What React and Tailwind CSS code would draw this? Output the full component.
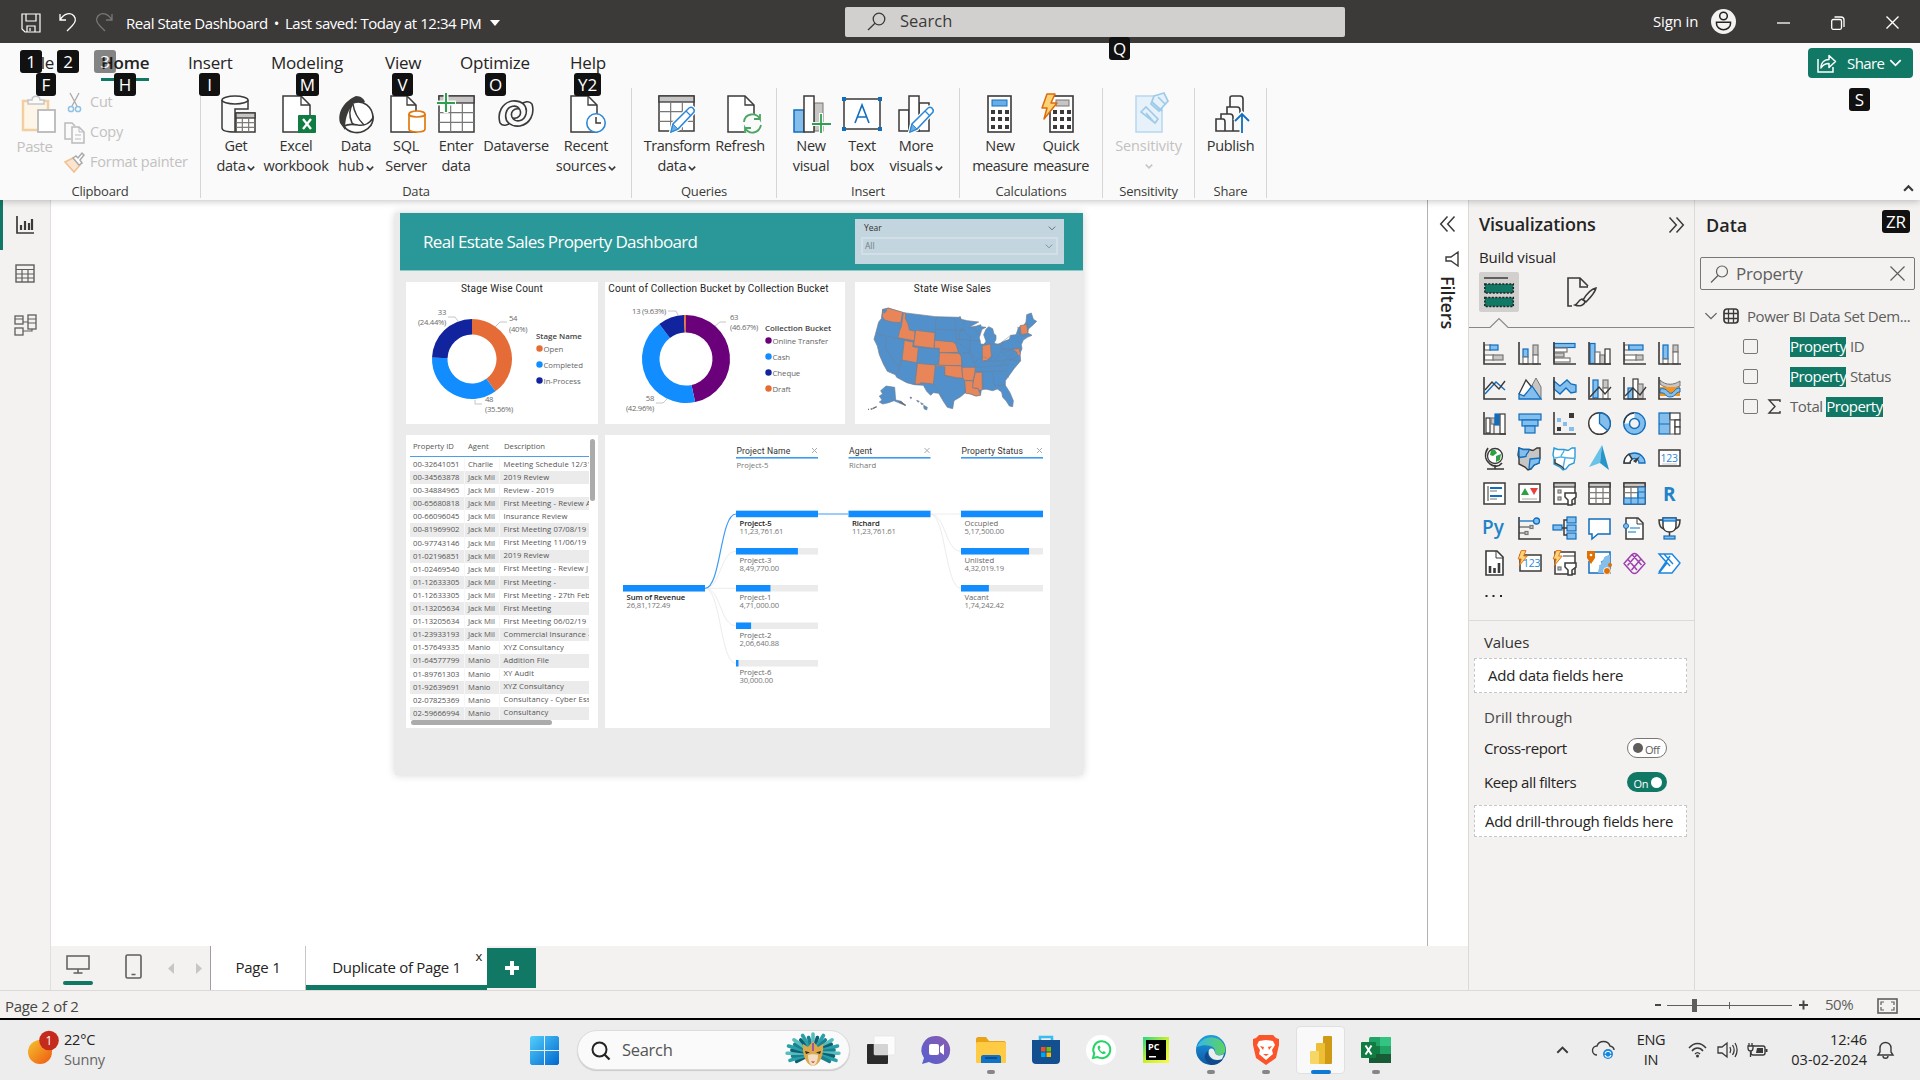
import React from "react";

const K = "#3b3a39";
const B = "#106ebe";
const L = "#83beec";
const G = "#797775";
const LG = "#c8c6c4";

function Svg({ w = 23, h, vb, className = "", children, ...rest }) {
  const hh = h ?? w;
  return (
    <svg width={w} height={hh} viewBox={vb || `0 0 ${w} ${hh}`} fill="none" className={`shrink-0 overflow-visible ${className}`} {...rest}>
      {children}
    </svg>
  );
}

function KeyTip({ children, className = "" }) {
  return (
    <span className={`absolute z-20 flex h-[23px] items-center justify-center rounded-[3px] bg-[#111] text-[17px] leading-none text-white ${className}`}>
      {children}
    </span>
  );
}

function Chevron({ className = "", w = 8, color = K, sw = 2 }) {
  return (
    <Svg w={w} h={w * 0.6} vb="0 0 10 6" className={className}>
      <path d="M1 .8 5 4.8 9 .8" stroke={color} strokeWidth={sw} />
    </Svg>
  );
}

/* ---------- Title bar ---------- */
function TitleBar() {
  return (
    <header className="relative z-20 flex h-[43px] shrink-0 items-center bg-[#3b3a39] text-white">
      <div className="flex w-[845px] items-center pl-[21px]">
        <Svg w={20} h={20} className="mt-0.5">
          <path d="M1 1h18v18H4l-3-3zM5 1v7h10V1M6 19v-6h8v6M9 15v3" stroke="#fff" strokeWidth="1.2" />
        </Svg>
        <Svg w={17} h={20} className="ml-[18px]">
          <path d="M1 2v6h6M1 8C5 1 12 0 15 4s1 7-2 10l-5 5" stroke="#fff" strokeWidth="1.3" />
        </Svg>
        <Svg w={17} h={20} className="ml-[20px]">
          <path d="M16 2v6h-6M16 8C12 1 5 0 2 4s-1 7 2 10l5 5" stroke="#797775" strokeWidth="1.3" />
        </Svg>
        <span className="ml-[13px] mt-1 whitespace-nowrap text-[15px] tracking-[-0.45px]">Real State Dashboard<span className="mx-[6px]">•</span>Last saved: Today at 12:34 PM</span>
        <Svg w={10} h={6} className="ml-[9px] mt-0.5"><path d="M0 0h10L5 6z" fill="#fff" /></Svg>
      </div>
      <div className="relative flex h-[30px] w-[500px] items-center rounded-[2px] bg-[#d2d0ce] pl-[22px] text-[#3b3a39]">
        <Svg w={19} h={19}><circle cx="12" cy="7" r="5.8" stroke={K} strokeWidth="1.3" /><path d="M8 11.2 1 18" stroke={K} strokeWidth="1.3" /></Svg>
        <span className="ml-[14px] text-[16.5px]">Search</span>
        <KeyTip className="left-[264px] top-[30px] w-[21px]">Q</KeyTip>
      </div>
      <div className="flex flex-1 items-center pl-[308px]">
        <span className="w-[58px] text-[15px] tracking-[-0.15px]">Sign in</span>
        <Svg w={25} h={25}>
          <circle cx="12.5" cy="12.5" r="12.5" fill="#f3f2f1" />
          <circle cx="12.5" cy="7" r="3.8" stroke="#222" strokeWidth="1.5" />
          <path d="M5.5 13.2h14v1.5a7 6 0 0 1-14 0z" stroke="#222" strokeWidth="1.5" />
        </Svg>
        <Svg w={13} h={2} className="ml-[41px] mt-0.5"><path d="M0 1h13" stroke="#fff" strokeWidth="1.3" /></Svg>
        <Svg w={14} h={14} className="ml-[41px] mt-0.5"><rect x=".7" y="3.5" width="9.8" height="9.8" rx="1.5" stroke="#fff" strokeWidth="1.3" /><path d="M3.5 1h6.5a3 3 0 0 1 3 3v7" stroke="#fff" strokeWidth="1.3" /></Svg>
        <Svg w={13} h={13} className="ml-[41px] mt-0.5"><path d="M.5.5l12 12M12.5.5l-12 12" stroke="#fff" strokeWidth="1.4" /></Svg>
      </div>
    </header>
  );
}

/* ---------- Ribbon ---------- */
const tabs = [
  { name: "File", w: "w-[73px]", tip: "F", tipCls: "left-[8px] w-[20px]" },
  { name: "Home", w: "w-[87px]", tip: "H", tipCls: "left-[13px] w-[22px]", active: true },
  { name: "Insert", w: "w-[83px]", tip: "I", tipCls: "left-[11px] w-[21px]" },
  { name: "Modeling", w: "w-[114px]", tip: "M", tipCls: "left-[25px] w-[23px]" },
  { name: "View", w: "w-[75px]", tip: "V", tipCls: "left-[7px] w-[21px]" },
  { name: "Optimize", w: "w-[110px]", tip: "O", tipCls: "left-[25px] w-[21px]" },
  { name: "Help", w: "w-[90px]", tip: "Y2", tipCls: "left-[4px] w-[27px]" },
];

function MenuTabs() {
  return (
    <nav className="relative flex h-10 items-center pl-[28px] text-[17px] text-[#252423]">
      {tabs.map((t) => (
        <div key={t.name} className={`relative flex h-10 items-center ${t.w}`}>
          <span className={t.active ? "font-semibold tracking-[-0.2px]" : "tracking-[-0.2px]"}>{t.name}</span>
          {t.active && <span className="absolute bottom-[2px] left-0 h-[3px] w-[48px] bg-[#117865]" />}
          <KeyTip className={`top-[30px] ${t.tipCls}`}>{t.tip}</KeyTip>
        </div>
      ))}
      <KeyTip className="left-[20px] top-[7px] w-[22px]">1</KeyTip>
      <KeyTip className="left-[57px] top-[7px] w-[22px]">2</KeyTip>
      <KeyTip className="left-[94px] top-[7px] w-[22px] opacity-50">3</KeyTip>
      <div className="relative ml-auto mr-[7px] flex h-[30px] w-[105px] items-center rounded-[4px] bg-[#117865] pl-[9px] text-white">
        <Svg w={20} h={19}>
          <path d="M1 5v13h15v-5" stroke="#fff" strokeWidth="1.5" />
          <path d="M4 14c0-6 4-8.5 8-8.5V1.500l6.500 6-6.500 6V9.500c-3 0-6 1-8 4.500z" stroke="#fff" strokeWidth="1.500" strokeLinejoin="round" />
        </Svg>
        <span className="ml-[10px] w-[38px] text-[15px] font-medium tracking-[-0.6px]">Share</span>
        <Chevron w={13} color="#fff" sw={1.3} className="ml-[4px]" />
        <KeyTip className="left-[41px] top-[40px] w-[21px]">S</KeyTip>
      </div>
    </nav>
  );
}

const Doc = ({ x = 6, w = 27 }) => (
  <>
    <path d={`M${x} 1h${w - 9}l9 9v27h-${w}z`} fill="#fff" stroke={K} strokeWidth="1.5" />
    <path d={`M${x + w - 9} 1v9h9`} stroke={K} strokeWidth="1.3" />
  </>
);
const Pencil = () => (
  <>
    <path d="M13 37l2-8L31 13c3-2 6 1 5 4L20 34z" fill="#fff" stroke="#fff" strokeWidth="4" />
    <path d="M13 37l2-8L31 13c3-2 6 1 5 4L20 34z" fill="#fff" stroke="#2b88d8" strokeWidth="1.5" />
    <path d="M13 37l2-8 5 5z" fill="#69afe5" stroke="#2b88d8" />
    <path d="M28 16l5 5" stroke="#2b88d8" strokeWidth="1.3" />
  </>
);
const Grid = ({ x, y, w, h, head = 6, cols = 3, rows = 3, stroke = K }) => (
  <>
    <rect x={x} y={y} width={w} height={h} fill="#fff" stroke={stroke} strokeWidth="1.5" />
    <rect x={x} y={y} width={w} height={head} fill={LG} stroke={stroke} strokeWidth="1.3" />
    {Array.from({ length: cols - 1 }, (_, i) => <path key={i} d={`M${x + (w / cols) * (i + 1)} ${y + head}V${y + h}`} stroke={G} strokeWidth="1.2" />)}
    {Array.from({ length: rows - 1 }, (_, i) => <path key={i} d={`M${x} ${y + head + ((h - head) / rows) * (i + 1)}H${x + w}`} stroke={G} strokeWidth="1.2" />)}
  </>
);
const Bolt = ({ s = 1 }) => <path transform={`scale(${s})`} d="M7 1h8l-4 9h6L4 26l3-11H2z" fill="#fcd278" stroke="#dd6b0a" strokeWidth="1.5" strokeLinejoin="round" />;

const RI = {
  get: <><path d="M5 5v28c0 3 6 4 13 4V14h13V5" fill="#fafafa" stroke={K} strokeWidth="1.500" /><ellipse cx="18" cy="5" rx="13" ry="4" fill="#fff" stroke={K} strokeWidth="1.500" /><Grid x={19} y={18} w={19} h={19} head={5} /></>,
  excel: <><Doc x={6} w={27} /><rect x="21" y="20" width="18" height="18" rx="1" fill="#107c41" /><path d="M26 24l8 10M34 24l-8 10" stroke="#fff" strokeWidth="2.300" /></>,
  hub: <><path d="M19 1C8 6 0 16 3 28l5 7C8 25 10 16 16 10l12-3c-1-3-4-6-9-6z" fill={K} /><path d="M16 8c10-4 20 4 20 15 0 3-1 5-2 7-6 4-13 3-19-2-3-7-3-14 1-20z" fill="#fff" stroke={K} strokeWidth="1.600" /><path d="M7 31c4 7 14 8 20 5s9-8 9-13c-4 6-8 8-15 7-5-1-10-1-14 1z" fill="#fff" stroke={K} strokeWidth="1.600" /><path d="M16 9c1 8 5 15 11 21" stroke={K} strokeWidth="1.500" /></>,
  sql: <><Doc x={4} w={25} /><path d="M22 19v15c0 4 16 4 16 0V19" fill="#fff" stroke="#e07a10" strokeWidth="1.700" /><ellipse cx="30" cy="19" rx="8" ry="3" fill="#fff" stroke="#e07a10" strokeWidth="1.700" /></>,
  enter: <><Grid x={2} y={1} w={35} h={36} head={7} /><path d="M9-2v20M0 8h19" stroke="#fafafa" strokeWidth="5" /><path d="M9-2v19M0 8h18" stroke="#30a04f" strokeWidth="2" /></>,
  verse: <><path d="M3 28C0 18 5 8 15 6c9-1 16 4 14 13-2 8-11 9-14 3-2-5 2-9 7-8M35 9c3 10-2 20-12 22C14 32 7 27 9 18c2-8 11-9 14-3 2 5-2 9-7 8M3 28c3 4 8 2 10 0M35 9c-3-4-8-2-10 0" stroke={K} strokeWidth="1.600" /></>,
  recent: <><Doc x={4} w={26} /><circle cx="29" cy="28" r="9.200" fill="#fff" stroke="#2b88d8" strokeWidth="1.600" /><path d="M29 22v6h5" stroke={K} strokeWidth="1.500" /></>,
  transform: <><Grid x={1} y={1} w={35} h={35} head={6} /><Pencil /></>,
  refresh: <><Doc x={7} w={26} /><circle cx="31" cy="29" r="10.500" fill="#fafafa" /><path d="M23 27c1-9 12-10 16-3v-5M39 24h-6M40 30c-2 9-12 10-16 3v5M24 33h6" stroke="#4aa564" strokeWidth="1.800" /></>,
  newvis: <><rect x="2" y="15" width="10" height="22" fill={L} stroke={B} strokeWidth="1.500" /><rect x="22" y="8" width="9" height="28" fill={LG} stroke={G} /><rect x="12" y="1" width="10" height="36" fill="#fff" stroke={K} strokeWidth="1.500" /><path d="M29 18v22M19 29h20" stroke="#fafafa" strokeWidth="4" /><path d="M29 19v19M20 29h19" stroke="#30a04f" strokeWidth="1.800" /></>,
  text: <><rect x="1" y="4" width="36" height="30" fill="#fff" stroke={K} strokeWidth="1.500" />{[[1, 4], [37, 4], [1, 34], [37, 34]].map(([x, y]) => <rect key={x + "," + y} x={x - 2} y={y - 2} width="4" height="4" fill={B} />)}<path d="M12 28l7-18 7 18M14.500 22h9" stroke={B} strokeWidth="1.600" /></>,
  more: <><rect x="2" y="15" width="10" height="21" fill="#fff" stroke={K} strokeWidth="1.500" /><rect x="22" y="8" width="10" height="28" fill="#fff" stroke={K} strokeWidth="1.500" /><rect x="12" y="1" width="10" height="35" fill="#fff" stroke={K} strokeWidth="1.500" /><Pencil /></>,
  calc: <><rect x="7" y="1" width="23" height="36" fill="#fff" stroke={K} strokeWidth="1.600" /><rect x="11" y="5" width="15" height="6" fill="#69afe5" stroke={B} />{[15, 22, 30].map((y) => [10, 17, 24].map((x) => <rect key={x + "_" + y} x={x} y={y} width="4" height="4" fill={K} />))}</>,
  quick: <><rect x="8" y="1" width="23" height="36" fill="#fff" stroke={K} strokeWidth="1.600" /><rect x="14" y="5" width="13" height="6" fill={LG} stroke={G} />{[15, 22, 30].map((y) => [11, 18, 25].map((x) => <rect key={x + "_" + y} x={x} y={y} width="4" height="4" fill={K} />))}<g transform="translate(-2,-2)"><Bolt /></g></>,
  sens: <><rect x="6" y="1" width="26" height="36" fill="#e6f1fa" stroke="#b5d7ef" strokeWidth="1.500" /><path d="M11 17l5-5 12 12-3 4zM16 18l7 8M24 1l10-3 4 8-9 10-8-7zM22 7l10 9M28 2l7 7" fill="#e6f1fa" stroke="#9fcbea" strokeWidth="1.700" /></>,
  publish: <><path d="M4 35V24h7c1 0 2 1 2 3v9H4zM13 36h8V22c0-2-1-3-3-3h-9v5M15 19V12h10c2 0 3 1 3 3v5M18 12V3c0-1 1-2 2-2h8c2 0 3 1 3 3v13M4 36h24" stroke={K} strokeWidth="1.600" /><path d="M30 38V19M23 26l7-7 7 7" stroke="#fafafa" strokeWidth="5" /><path d="M30 38V19M23 26l7-7 7 7" stroke={B} strokeWidth="1.800" /></>,
};

function RibbonButton({ icon, l1, l2, chev, w, disabled }) {
  return (
    <div className={`flex h-[82px] flex-col items-center whitespace-nowrap text-[14.500px] leading-5 ${w} ${disabled ? "text-[#c3c1bf]" : "text-[#323130]"}`}>
      <Svg w={38}>{RI[icon]}</Svg>
      <span className="mt-[3px] tracking-[-0.300px]">{l1}</span>
      <span className="flex items-center tracking-[-0.300px]">
        {l2}
        {chev && <Chevron className={l2 ? "ml-0.5 mt-1" : "mt-2"} w={8} color={disabled ? LG : K} />}
      </span>
    </div>
  );
}

function Group({ name, w, pad = "", children }) {
  return (
    <div className={`my-[5px] h-[110px] border-r border-[#d8d6d4] pt-[7px] ${w}`}>
      <div className={`flex ${pad}`}>{children}</div>
      <div className="mt-[5px] text-center text-[13px] leading-[18px] tracking-[-0.2px] text-[#3b3a39]">{name}</div>
    </div>
  );
}

function Ribbon() {
  return (
    <section className="relative z-10 h-[157px] shrink-0 bg-[#fafafa] shadow-[0_1px_7px_rgba(0,0,0,0.25)]">
      <MenuTabs />
      <div className="relative flex">
        <Group name="Clipboard" w="w-[201px]" pad="pl-2">
          <div className="flex h-[82px] w-[56px] flex-col items-center text-[15px] leading-5 text-[#c3c1bf]">
            <Svg w={38} className="ml-[3px]">
              <rect x="4" y="6" width="25" height="29" fill="#fdf6e8" stroke="#f3cfa0" strokeWidth="2.500" />
              <path d="M9 9V5h4c0-5 8-5 8 0h4v4z" fill="#fafafa" stroke="#c6c6c6" strokeWidth="1.500" />
              <rect x="19" y="15" width="17" height="22" fill="#fff" stroke="#b9b9b9" strokeWidth="1.800" />
            </Svg>
            <span className="mr-[3px] mt-[3px] tracking-[-0.500px]">Paste</span>
          </div>
          <div className="-mt-[8px] h-[90px] text-[14.500px] tracking-[-0.250px] text-[#c3c1bf]">
            <div className="flex h-[30px] items-center gap-[5px]">
              <Svg w={21}><path d="M6 1l7 13M15 1L8 14" stroke="#aaa" strokeWidth="1.300" /><circle cx="7" cy="17" r="2.600" stroke="#8fc1e5" strokeWidth="1.500" /><circle cx="14" cy="17" r="2.600" stroke="#8fc1e5" strokeWidth="1.500" /></Svg>Cut
            </div>
            <div className="flex h-[30px] items-center gap-[5px]">
              <Svg w={21}><path d="M7 17H1V1h7l3 3" stroke="#bbb" strokeWidth="1.500" /><path d="M8 5h7l5 5v11H8z" fill="#fafafa" stroke="#bbb" strokeWidth="1.500" /><path d="M15 5v5h5M11 13h6M11 17h6" stroke="#bbb" /></Svg>Copy
            </div>
            <div className="flex h-[30px] items-center gap-[5px]">
              <Svg w={21}><path d="M1 10l8-4 7 7-6 7z" fill="#fbe5cf" stroke="#f0c092" strokeWidth="1.500" /><path d="M9 6l3-2 2 2 4-5 2 2-4 5 2 3-3 2z" fill="#fff" stroke="#aaa" strokeWidth="1.500" /></Svg>Format painter
            </div>
          </div>
        </Group>
        <Group name="Data" w="w-[431px]" pad="pl-[5px]">
          <RibbonButton icon="get" l1="Get" l2="data" chev w="w-[60px]" />
          <RibbonButton icon="excel" l1="Excel" l2="workbook" w="w-[60px]" />
          <RibbonButton icon="hub" l1="Data" l2="hub" chev w="w-[60px]" />
          <RibbonButton icon="sql" l1="SQL" l2="Server" w="w-[40px]" />
          <RibbonButton icon="enter" l1="Enter" l2="data" w="w-[60px]" />
          <RibbonButton icon="verse" l1="Dataverse" w="w-[60px]" />
          <RibbonButton icon="recent" l1="Recent" l2="sources" chev w="w-[80px]" />
        </Group>
        <Group name="Queries" w="w-[145px]" pad="pl-[9px]">
          <RibbonButton icon="transform" l1={<span className="tracking-[-0.450px]">Transform</span>} l2="data" chev w="w-[72px]" />
          <RibbonButton icon="refresh" l1="Refresh" w="w-[54px]" />
        </Group>
        <Group name="Insert" w="w-[183px]" pad="pl-[9px]">
          <RibbonButton icon="newvis" l1="New" l2="visual" w="w-[50px]" />
          <RibbonButton icon="text" l1="Text" l2="box" w="w-[52px]" />
          <RibbonButton icon="more" l1="More" l2="visuals" chev w="w-[56px]" />
        </Group>
        <Group name="Calculations" w="w-[143px]" pad="pl-[10px]">
          <RibbonButton icon="calc" l1="New" l2={<span className="tracking-[-0.550px]">measure</span>} w="w-[60px]" />
          <RibbonButton icon="quick" l1="Quick" l2={<span className="tracking-[-0.550px]">measure</span>} w="w-[62px]" />
        </Group>
        <Group name="Sensitivity" w="w-[92px]" pad="justify-center">
          <RibbonButton icon="sens" l1={<span className="tracking-[-0.100px]">Sensitivity</span>} chev disabled w="w-[70px]" />
        </Group>
        <Group name="Share" w="w-[72px]" pad="justify-center">
          <RibbonButton icon="publish" l1="Publish" w="w-[60px]" />
        </Group>
        <Chevron w={11} sw={2} className="ml-auto mr-[6px] mt-[102px] rotate-180" />
      </div>
    </section>
  );
}

/* ---------- Left rail ---------- */
function Rail() {
  return (
    <aside className="flex w-[51px] flex-col items-center border-r border-[#e1dfdd] bg-[#f3f2f1]">
      <div className="flex h-[50px] w-full items-center justify-center border-l-[3px] border-[#117865] pr-[3px]">
        <Svg w={18}><path d="M1 0v17h17" stroke={K} strokeWidth="1.700" /><path d="M5 9v5M9 5v9M13 7v7M16 3v11" stroke={K} strokeWidth="2.200" /></Svg>
      </div>
      <div className="flex h-[48px] items-center"><Svg w={20}><rect x="1" y="1" width="18" height="17" stroke="#605e5c" strokeWidth="1.400" /><path d="M1 5.500h18M1 10h18M1 14h18M7 5v13M13 5v13" stroke="#605e5c" strokeWidth="1.200" /></Svg></div>
      <div className="flex h-[54px] items-center"><Svg w={22}><rect x="1" y="2" width="8" height="8" stroke="#605e5c" strokeWidth="1.300" /><rect x="1" y="14" width="8" height="7" stroke="#605e5c" strokeWidth="1.300" /><rect x="14" y="1" width="8" height="14" stroke="#605e5c" strokeWidth="1.300" /><path d="M1 5h8M14 5h8M14 9h8M9 8h5M9 17h9v-2" stroke="#605e5c" strokeWidth="1.200" /></Svg></div>
    </aside>
  );
}

/* ---------- Report visuals ---------- */
function arc(cx, cy, R, r, a0, a1) {
  const p = (rad, t) => [cx + rad * Math.sin(t * 2 * Math.PI), cy - rad * Math.cos(t * 2 * Math.PI)].map((n) => n.toFixed(2)).join(" ");
  const big = a1 - a0 > 0.5 ? 1 : 0;
  return `M${p(R, a0)}A${R} ${R} 0 ${big} 1 ${p(R, a1)}L${p(r, a1)}A${r} ${r} 0 ${big} 0 ${p(r, a0)}Z`;
}

function Donut({ w, cx, cy, R, r, slices, labels, lines, legendTitle, legend, lx, ly }) {
  let a = 0;
  return (
    <Svg w={w} h={126} className="block font-[Open_Sans,sans-serif] text-[7.700px]">
      {slices.map(([v, c]) => {
        const d = arc(cx, cy, R, r, a, a + v);
        a += v;
        return <path key={c} d={d} fill={c} />;
      })}
      {lines.map((d) => <path key={d} d={d} stroke="#c0c0c0" strokeWidth=".9" />)}
      {labels.map(([x, y, t, e]) => <text key={t} x={x} y={y} fill="#6b6b6b" textAnchor={e ? "end" : "start"} letterSpacing="-.3">{t}</text>)}
      <text x={lx} y={ly} fill="#444" fontWeight="600" fontSize="7.900" letterSpacing="0">{legendTitle}</text>
      {legend.map(([t, c], i) => (
        <g key={t}>
          <circle cx={lx + 3.500} cy={ly + 9.500 + i * 16} r="3.200" fill={c} />
          <text x={lx + 7.500} y={ly + 12.500 + i * 16} fill="#666" fontSize="7.800" letterSpacing="-.05">{t}</text>
        </g>
      ))}
    </Svg>
  );
}

function Card({ title, w, children }) {
  return (
    <div className={`h-[142px] overflow-hidden bg-white ${w}`}>
      <div className="h-4 whitespace-nowrap text-center font-[Roboto,sans-serif] text-[10px] leading-[14px] tracking-[0.200px] text-[#252423]">{title}</div>
      {children}
    </div>
  );
}

const orangeStates = [
  "M56 28 60 40 67 34 67 28 72 24 116 37 110 68 84 66 62 60 55 50z",
  "M118 38 125 40 124 56 132 72 136 90 153 94 151 122 102 113 107 92 112 80z",
  "M155 91 213 98 210 145 149 137z",
  "M121 121 148 126 146 140 163 143 158 188 114 180z",
  "M212 121 268 126 276 134 283 157 226 158 226 145 211 144z",
  "M227 158 285 160 292 170 293 197 224 196z",
  "M160 190 214 195 208 252 170 248 168 252 152 252z",
  "M215 195 293 198 296 234 276 234 242 226 242 200 215 199z",
  "M294 202 334 202 332 222 327 242 301 241 296 232z",
  "M334 217 354 217 355 270 345 271 342 265 324 264 328 244z",
  "M302 242 327 242 326 264 342 266 345 274 350 286 336 288 320 282 305 280z",
  "M355 137 379 132 382 168 370 181 355 183z",
  "M468 77 488 73 492 100 472 104z",
  "M445 148 468 144 466 152 470 162 462 168 458 156z",
];

function UsMap() {
  return (
    <Svg w={180} h={118} vb="0 0 540 354" className="ml-[9px] mt-[2px] block">
      <g stroke="#6f7f91" strokeWidth="2" strokeLinejoin="round">
        <path fill="#5290cb" d="M56 28 72 24 118 38 215 50 286 52 288 49 292 58 310 62 344 66 326 76 316 82 338 78 350 74 352 80 366 82 354 88 346 112 350 132 360 133 366 124 359 104 366 88 374 80 386 86 390 102 396 106 396 118 390 130 402 133 420 124 436 118 440 106 456 104 464 82 480 76 486 66 488 44 502 39 508 58 518 64 508 74 494 86 490 98 504 106 490 112 478 120 472 134 474 146 468 160 470 182 462 192 450 206 436 226 424 242 424 256 438 278 448 302 446 320 436 318 426 302 416 292 413 276 400 267 386 272 368 268 352 268 350 284 336 288 320 282 304 278 290 290 270 302 266 326 250 322 238 304 224 280 208 278 200 286 188 274 178 256 150 254 128 248 98 232 94 224 70 214 58 192 46 164 40 138 30 118 36 96 44 66 52 56z" />
        <path fill="#5290cb" d="M66 258 92 262 95 300 112 304 124 316 108 310 90 302 74 308 56 312 46 306 54 300 46 288 56 282 50 272z" />
        <path fill="#5290cb" d="M179 316 190 322 188 330 180 326zM158 301l8 3-4 3zM138 291l6 2-4 3zM170 308l8 4-5 2z" />
        <path stroke="#6a7078" strokeWidth="4" d="M107 305l18 11M38 320l-12 6M12 328h3M20 327l5 0" />
        {orangeStates.map((d) => <path key={d} d={d} fill="#e8865a" />)}
        <path d="M217 50 211 121M213 88l62 2M272 53l4 38 2 34M39 102l110 24M66 112l-2 34 40 55M104 201l10-22M113 180l-14 44M160 188l-6 64M163 143l62 4M275 91l26 0M276 118l42 2M290 84l-5 38M301 62l-4 28 22 24M318 80l14 6 16 22M319 114l-2 44M277 125l42 30 12 20M285 160l30-2M315 158l14 28 6 16M292 170l4 32M319 121l32 2M328 188l30-18 20 10 14-22M335 202l100-8M334 215l96-2M356 216l2 52M384 214l8 42M392 256l32 0M404 210l32 24M360 184l46-2 26-4 38 6M381 134l26-2M408 132l4 22-20 26M414 125l2 22 54 0M412 154l20 20 16-20M416 147l8 10 22-8M432 178l-26 18M440 106l-26 20M470 128l-14-6M459 170l-24 14M210 252l28 42M242 200v26l54 10M301 241l3 38" fill="none" strokeWidth="1.400" />
        <path d="M460 80l10 26 20-2M488 66l4 30" fill="none" strokeWidth="1.400" />
      </g>
    </Svg>
  );
}

const rows = [
  ["00-32641051", "Charlie", "Meeting Schedule 12/31"], ["00-34563878", "Jack Mil", "2019 Review"], ["00-34884965", "Jack Mil", "Review - 2019"],
  ["00-65680818", "Jack Mil", "First Meeting - Review A"], ["00-66096045", "Jack Mil", "Insurance Review"], ["00-81969902", "Jack Mil", "First Meeting 07/08/19"],
  ["00-97743146", "Jack Mil", "First Meeting 11/06/19"], ["01-02196851", "Jack Mil", "2019 Review"], ["01-02469540", "Jack Mil", "First Meeting - Review J"],
  ["01-12633305", "Jack Mil", "First Meeting -"], ["01-12633305", "Jack Mil", "First Meeting - 27th Feb"], ["01-13205634", "Jack Mil", "First Meeting"],
  ["01-13205634", "Jack Mil", "First Meeting 06/02/19"], ["01-23933193", "Jack Mil", "Commercial Insurance -"], ["01-57649335", "Manio", "XYZ Consultancy"],
  ["01-64577799", "Manio", "Addition File"], ["01-89761303", "Manio", "XY Audit"], ["01-92639691", "Manio", "XYZ Consultancy"],
  ["02-07825369", "Manio", "Consultancy - Cyber Ess"], ["02-59666994", "Manio", "Consultancy"],
];

function DataTable() {
  return (
    <div className="relative h-[293px] w-[192px] bg-white pl-1 pt-[4px] text-[7.700px] text-[#555]">
      <div className="w-[179px] overflow-hidden">
        <div className="flex h-[18px] items-center border-b border-[#4a9fe8] pb-[2px]">
          <span className="w-[55px] pl-[3px]">Property ID</span>
          <span className="w-[35px] pl-[3px]">Agent</span>
          <span className="pl-[4px]">Description</span>
        </div>
        <div className="pt-px">
          {rows.map((r, i) => (
            <div key={i} className={`flex h-[13.100px] items-center whitespace-nowrap leading-none ${i % 2 ? "bg-[#ebebeb]" : "bg-white"}`}>
              <span className="h-full w-[55px] shrink-0 border-r border-[#f6f6f6] pl-[3px] leading-[13px]">{r[0]}</span>
              <span className="h-full w-[35px] shrink-0 border-r border-[#f6f6f6] pl-[3px] leading-[13px]">{r[1]}</span>
              <span className="shrink-0 pl-[3.500px] tracking-[0.100px]">{r[2]}</span>
            </div>
          ))}
        </div>
      </div>
      <span className="absolute right-[3px] top-[4px] h-[62px] w-[5px] rounded-full bg-[#ababab]" />
      <span className="absolute bottom-[3px] left-[5px] h-[5px] w-[141px] rounded-full bg-[#ababab]" />
    </div>
  );
}

const nodes = [
  [18, 150, 1, "Sum of Revenue", "26,81,172.49", true],
  [131, 75.7, 1, "Project-5", "11,23,761.61", true],
  [131, 113, 0.755, "Project-3", "8,49,770.00"],
  [131, 150, 0.42, "Project-1", "4,71,000.00"],
  [131, 187.5, 0.184, "Project-2", "2,06,640.88"],
  [131, 225, 0.03, "Project-6", "30,000.00"],
  [243.5, 75.7, 1, "Richard", "11,23,761.61", true],
  [356, 75.7, 1, "Occupied", "5,17,500.00"],
  [356, 113, 0.83, "Unlisted", "4,32,019.19"],
  [356, 150, 0.34, "Vacant", "1,74,242.42"],
];
const heads = [[131, "Project Name", "Project-5"], [243.5, "Agent", "Richard"], [356, "Property Status", ""]];

function DecompositionTree() {
  return (
    <div className="h-[293px] w-[445px] bg-white">
      <Svg w={445} h={293} className="block font-[Open_Sans,sans-serif] text-[7.700px]">
        <g stroke="#ececec" strokeWidth="1">
          {[116.3, 153.3, 190.8, 228.3].map((y) => <path key={y} d={`M100 153.300C116 153.300 115 ${y} 131 ${y}`} />)}
          {[79, 116.3, 153.3].map((y) => <path key={y} d={`M325 79C341 79 340 ${y} 356 ${y}`} />)}
        </g>
        <path d="M100 153.300C116 153.300 115 79 131 79M213 79h30" stroke="#3d9bf5" strokeWidth="1.200" />
        {heads.map(([x, t, s]) => (
          <g key={t}>
            <text x={x + 0.5} y="19" fill="#333" fontSize="8.600" className="font-[Roboto,sans-serif]" letterSpacing=".15">{t}</text>
            <path d={`M${x + 76} 13l5 5M${x + 81} 13l-5 5`} stroke="#aaa" />
            <rect x={x} y="22" width="82" height="1.600" fill="#3d9bf5" />
            <text x={x + 0.5} y="33" fill="#777">{s}</text>
          </g>
        ))}
        {nodes.map(([x, y, f, t, v, b]) => (
          <g key={t}>
            <rect x={x} y={y} width="82" height="6.500" fill="#ebebeb" />
            <rect x={x} y={y} width={82 * f} height="6.500" fill="#118dff" />
            <text x={x + 3.5} y={y + 15} fill={b ? "#222" : "#666"} fontWeight={b ? 600 : 400} letterSpacing={b ? "-.1" : "0"}>{t}</text>
            <text x={x + 3.5} y={y + 23.2} fill="#777" letterSpacing="-.15">{v}</text>
          </g>
        ))}
      </Svg>
    </div>
  );
}

function Report() {
  return (
    <div className="ml-[344px] mt-[13px] h-[562px] w-[688px] bg-[#ebebeb] shadow-[0_0_8px_rgba(0,0,0,0.18)]">
      <div className="ml-[5px] flex h-[58px] items-start justify-between border-b border-[#8ccaca] bg-[#2a9898] pl-[23px] pr-[19px] pt-[6px]">
        <h1 className="mt-[11px] text-[17px] leading-6 tracking-[-0.640px] text-white">Real Estate Sales Property Dashboard</h1>
        <div className="h-[45px] w-[209px] bg-[#c3d5de] px-[6px] pt-[3px] text-[8.500px]">
          <div className="flex h-3 items-center justify-between pl-[3px] pr-[2px] font-medium leading-none text-[#333]">Year<Chevron w={8} sw={1} color="#555" /></div>
          <div className="mt-[3px] flex h-[18px] items-center justify-between border-2 border-[#d3dfe6] pl-[2px] pr-[3px] leading-none text-[#718088]">All<Chevron w={8} sw={1} color="#718088" /></div>
        </div>
      </div>
      <div className="flex pl-[11px] pt-[11px]">
        <div className="mr-[7px]">
          <Card title="Stage Wise Count" w="w-[192px]">
            <Donut w={192} cx={66} cy={61} R={40} r={24.5}
              slices={[[0.4, "#e66c37"], [0.3556, "#118dff"], [0.2444, "#12239e"]]}
              labels={[[40, 17, "33", true], [40, 27, "(24.44%)", true], [103, 23, "54"], [103, 33.5, "(40%)"], [79, 104, "48"], [79, 114, "(35.56%)"]]}
              lines={["M42 19h7l3 4", "M101 24h-7l-5 5", "M69 102v4h7"]}
              legendTitle="Stage Name" lx={130} ly={41} legend={[["Open", "#e66c37"], ["Completed", "#118dff"], ["In-Process", "#12239e"]]} />
          </Card>
        </div>
        <div className="mr-[10px]">
          <Card title={<span className="mr-[13px]">Count of Collection Bucket by Collection Bucket</span>} w="w-[240px]">
            <Donut w={240} cx={81} cy={61} R={44} r={26.5}
              slices={[[0.4667, "#6b007b"], [0.4296, "#118dff"], [0.0963, "#12239e"], [0.0074, "#e66c37"]]}
              labels={[[61, 16, "13 (9.63%)", true], [125, 22, "63"], [125, 32, "(46.67%)"], [49, 103, "58", true], [49, 113, "(42.96%)", true]]}
              lines={["M63 13h8l2 4", "M121 24h-6l-5 4", "M51 105h7l4-4"]}
              legendTitle="Collection Bucket" lx={160} ly={33} legend={[["Online Transfer", "#6b007b"], ["Cash", "#118dff"], ["Cheque", "#12239e"], ["Draft", "#e66c37"]]} />
          </Card>
        </div>
        <Card title="State Wise Sales" w="w-[195px]"><UsMap /></Card>
      </div>
      <div className="flex gap-[7px] pl-[11px] pt-[11px]">
        <DataTable />
        <DecompositionTree />
      </div>
    </div>
  );
}

function PageTabs() {
  return (
    <div className="flex h-[44px] bg-[#f3f2f1] text-[15px] text-[#252423]">
      <div className="flex w-[159px] items-center">
        <div className="ml-[12px] flex w-[30px] flex-col items-center">
          <Svg w={24} h={19} className="mt-[4px]"><rect x="1" y="1" width="22" height="13" stroke="#605e5c" strokeWidth="1.500" /><path d="M12 14v4M7.500 18h9" stroke="#605e5c" strokeWidth="1.500" /></Svg>
          <span className="mt-[7px] h-[4px] w-[30px] rounded-full bg-[#117865]" />
        </div>
        <Svg w={17} h={25} className="mb-1 ml-[32px]"><rect x="1" y="1" width="15" height="23" rx="1.500" stroke="#605e5c" strokeWidth="1.600" /><path d="M6.500 20.500h4" stroke="#605e5c" strokeWidth="1.500" /></Svg>
        <Svg w={6} h={11} className="ml-[26px]"><path d="M6 0v11L0 5.500z" fill={LG} /></Svg>
        <Svg w={6} h={11} className="ml-[22px]"><path d="M0 0v11l6-5.500z" fill={LG} /></Svg>
      </div>
      <div className="flex w-[96px] items-center justify-center border-x border-[#c8c6c4] border-l-[#a19f9d] bg-white pb-[2px] tracking-[-0.2px]">Page 1</div>
      <div className="relative flex w-[181px] items-center justify-center border-b-[5px] border-[#117865] bg-white pt-[3px] font-medium tracking-[-0.3px]">
        Duplicate of Page 1
        <span className="absolute right-[5px] top-[1px] text-[13px]">x</span>
      </div>
      <div className="mt-[2px] flex h-[40px] w-[49px] items-center justify-center bg-[#117865]">
        <Svg w={14}><path d="M7 0v14M0 7h14" stroke="#fff" strokeWidth="4" /></Svg>
      </div>
    </div>
  );
}

/* ---------- Right panes ---------- */
const axes = <path d="M1 0v22h22" stroke={K} strokeWidth="1.600" />;
const r = (x, y, w, h, f = L, s = B) => <rect key={`${x},${y},${w}`} x={x} y={y} width={w} height={h} fill={f} stroke={s} strokeWidth="1.200" />;
const calloutNumber = (x, y) => <text x={x} y={y} fontSize="10.500" fill="#2b88d8" letterSpacing="-.3">123</text>;
const mapShape = "M1 1l4 1.500h6l4 1 4-2.500h3v9l-1 6-5 2-3 4-3 1-3-3-6-3V11l-1-3z";
const funnelOver = <path d="M12 11h11v4l-4 3v5h-4v-5l-3-3z" fill="#fff" stroke={K} strokeWidth="1.500" />;

const vizIcons = [
  <>{r(1.5, 3, 6, 5, "#fff", G)}{r(7, 3, 8, 5)}{r(1.5, 13, 9, 5, "#fff", G)}{r(10, 13, 10, 5, LG, G)}{axes}</>,
  <>{r(5, 7, 5, 8)}{r(5, 15, 5, 7, "#fff", G)}{r(15, 3, 5, 10, LG, G)}{r(15, 13, 5, 9, "#fff", G)}{axes}</>,
  <>{r(1, 1.500, 21, 4)}{r(1, 6, 13, 4, "#fff", G)}{r(1, 11, 10, 4, LG, G)}{r(1, 16, 16, 4, "#fff", G)}{axes}</>,
  <>{r(2, 1.500, 5, 20)}{r(7, 10, 5, 12, "#fff", G)}{r(12, 13, 5, 9, LG, G)}{r(17, 7, 5, 15, "#fff", K)}{axes}</>,
  <>{r(1.500, 3, 4, 5, "#fff", G)}{r(6, 3, 14, 5)}{r(1.500, 13, 12, 5, "#fff", G)}{r(13, 13, 7, 5, LG, G)}{axes}</>,
  <>{r(5, 3, 5, 14)}{r(5, 17, 5, 5, "#fff", G)}{r(15, 3, 5, 7, LG, G)}{r(15, 10, 5, 12, "#fff", G)}{axes}</>,
  <>{axes}<path d="M2 17l11-12 9 8" stroke={B} strokeWidth="1.400" /><path d="M2 13l7-8 7 7 6-8" stroke={K} strokeWidth="1.400" /></>,
  <><path d="M11 14l7-13 5 9v12" fill={LG} stroke={G} /><path d="M1 17L8 3l8 10" fill="#fff" stroke={K} strokeWidth="1.300" /><path d="M1 22v-5l5 2 8-10 9 13z" fill={L} stroke={B} strokeWidth="1.300" /></>,
  <><path d="M1 4l6 5 7-6 4 4 5 1v7l-5 1-5-5-6 6-6-5z" fill={L} stroke={B} strokeWidth="1.300" />{axes}</>,
  <>{r(5, 3, 5, 18)}{r(15, 3, 5, 8, LG, G)}{r(15, 11, 5, 11, "#fff", G)}{axes}<path d="M2 20l9-10 6 7 6-7" stroke={K} strokeWidth="1.400" /></>,
  <>{r(5, 11, 5, 11)}{r(10, 2, 5, 20, "#fff", K)}{r(15, 7, 5, 15, LG, G)}{axes}<path d="M2 19l8-8 7 7 6-8" stroke={K} strokeWidth="1.400" /></>,
  <><path d="M2 3c6 6 14 5 20 1v5c-6 3-14 3-20-2z" fill={LG} stroke={G} /><path d="M2 10h20v9H2z" fill="#f7941e" /><path d="M2 12c8-2 8 6 12 4 3-2 3-5 8-5v4c-5 0-4 5-10 5C7 20 8 15 2 16z" fill={L} stroke={B} />{axes}</>,
  <>{r(3, 6, 4, 15, "#fff", K)}{r(8, 6, 4, 6, LG, G)}{r(12, 2, 4, 11, B, B)}{r(17, 2, 5, 20, "#fff", K)}<path d="M11 12v10" stroke={K} />{axes}</>,
  <>{r(1, 2, 22, 6)}{r(4, 8, 16, 6)}{r(7, 14, 10, 7)}</>,
  <>{axes}<rect x="4" y="6" width="4" height="4" fill={L} /><rect x="10" y="10" width="4" height="4" fill={L} /><rect x="16" y="15" width="5" height="4" fill={L} /><rect x="16" y="1" width="5" height="5" fill={K} /><rect x="4" y="15" width="4" height="4" fill={K} /></>,
  <><circle cx="11.500" cy="11.500" r="10.800" fill="#fff" stroke={K} strokeWidth="1.400" /><path d="M11.500 1a10.500 10.500 0 0 1 8 17.500l-8-7z" fill={L} stroke={B} strokeWidth="1.300" /></>,
  <><circle cx="11.500" cy="11.500" r="8" stroke={L} strokeWidth="6" /><path d="M3.500 11.500a8 8 0 0 1 8-8" stroke="#fff" strokeWidth="6" /><circle cx="11.500" cy="11.500" r="10.800" stroke={B} strokeWidth="1.300" /><circle cx="11.500" cy="11.500" r="5" stroke={B} strokeWidth="1.400" /><path d="M1 11a10.500 10.500 0 0 1 10-10" stroke={K} strokeWidth="1.400" /></>,
  <>{r(1, 1, 11, 21)}{r(12, 1, 10, 7, "#fff", K)}{r(12, 8, 5, 14, "#fff", G)}{r(17, 8, 5, 7, "#fff", K)}{r(17, 15, 5, 7, "#fff", K)}<path d="M1 12h11" stroke={B} /></>,
  <><circle cx="12" cy="9" r="7.500" fill="#fff" stroke={K} strokeWidth="1.300" /><path d="M8 3l4 0 2 3-4 3-3-1zM13 9l5-2-1 6-4 2z" fill="#2ea043" /><path d="M5 1c-4 6-3 12 2 16 4 3 9 3 12-1M12 18v4M4 22h17" stroke={K} strokeWidth="1.600" /></>,
  <><path d={mapShape} fill={LG} stroke={K} strokeWidth="1.400" /><path d="M1 1l4 1.500h6c0 4-3 3-3 7l-6 1-1-2zM12 12l10-1-1 5-5 2-3 4-2-1z" fill={L} stroke={B} strokeWidth="1.300" /></>,
  <><path d={mapShape} fill="#fff" stroke="#2b9bd8" strokeWidth="1.400" /><path d="M11 3c0 4-3 3-3 7l-6 1M8 10c3 0 8 2 14 1M12 11l-2 10" stroke="#50b0e8" strokeWidth="1.400" /><path d="M2 12v4l6 3 3 3" stroke={K} strokeWidth="1.400" /></>,
  <><path d="M14-2L1 20l11-4z" fill="#69c3e8" /><path d="M14-2L12 16l9 7z" fill="#2795cc" /></>,
  <><path d="M1 16a10.500 10 0 0 1 21 0h-6a4.500 4.500 0 0 0-9 0z" fill={L} stroke={B} strokeWidth="1.300" /><path d="M1 16c0-4 2-7 5-9l3 5c-1 1-2 2-2 4z" fill="#fff" stroke={K} strokeWidth="1.500" /><path d="M10 14l7-5-4 7z" fill={K} /></>,
  <><rect x="1" y="3" width="21" height="16" fill="#fff" stroke={K} strokeWidth="1.500" />{calloutNumber(2.500, 14.500)}<path d="M4 17h15" stroke={LG} /></>,
  <><rect x="1" y="1" width="21" height="21" fill="#fff" stroke={K} strokeWidth="1.500" /><path d="M5 4v15" stroke={K} /><path d="M7 6h12M7 14h12" stroke={B} strokeWidth="2" /><path d="M7 9h7M7 17h7" stroke={G} strokeWidth="1.200" /></>,
  <><rect x="1" y="2" width="21" height="18" fill="#fff" stroke={K} strokeWidth="1.500" /><path d="M3 13l4-7 4 7z" fill="#2ea043" /><path d="M12 6h8l-4 7z" fill="#e8413c" /><path d="M4 17h15" stroke={LG} strokeWidth="1.500" /></>,
  <><rect x="1" y="1" width="21" height="21" fill="#fff" stroke={K} strokeWidth="1.500" />{r(1, 1, 21, 4, LG, K)}{r(5, 8, 3, 3, LG, G)}{r(5, 15, 3, 3, LG, G)}{funnelOver}</>,
  <Grid x={1} y={1} w={21} h={21} head={4} />,
  <><Grid x={1} y={1} w={21} h={21} head={4} /><path d="M15 5h7v17H1v-6h14z" fill={L} stroke={B} /><path d="M8 16v6M15 10v12M15 10h7M15 16h7" stroke={B} /></>,
  <text x="5" y="18.500" fontSize="19" fontWeight="700" fill="#2183c8">R</text>,
  <text x="-1" y="17" fontSize="19" fontWeight="600" fill="#2183c8">Py</text>,
  <>{axes}<path d="M1 4h15" stroke={B} strokeWidth="1.300" /><circle cx="18.500" cy="4" r="3" fill={L} stroke={B} strokeWidth="1.300" /><path d="M1 10h11M1 16h6" stroke={K} strokeWidth="1.200" />{r(12, 8.500, 3, 3, LG, G)}{r(7, 14.500, 3, 3, LG, G)}</>,
  <>{r(0, 8, 9, 5)}{r(14, 0, 9, 6)}{r(14, 8, 9, 6)}{r(14, 16, 9, 6)}<path d="M9 11h5M14 3h-3v15h3" stroke={K} strokeWidth="1.500" /></>,
  <path d="M1 2h21v15H10l-6 5v-5H1z" fill="#fff" stroke={B} strokeWidth="1.500" />,
  <><path d="M3 8V1h12l5 5v16H3V11" fill="#fff" stroke={K} strokeWidth="1.500" /><path d="M14 1v6h6" stroke={K} /><circle cx="3" cy="9" r="2.500" fill={L} stroke={B} /><path d="M7 11h10M5 15h8" stroke="#50a8e0" strokeWidth="1.300" /></>,
  <><path d="M5 1h13v8c0 8-13 8-13 0z" fill="#fff" stroke={K} strokeWidth="1.500" /><path d="M5 3H1c0 5 1 8 5 9M18 3h4c0 5-1 8-5 9M11.500 15v4" stroke={K} strokeWidth="1.500" />{r(5, 1, 13, 3)}{r(6, 19, 11, 3)}</>,
  <><path d="M3-1h11l6 6v18H3z" fill="#fff" stroke={K} strokeWidth="1.600" /><path d="M13-1v7h7" stroke={K} /><path d="M7 14v7M11.500 16v5M16 11v10" stroke={K} strokeWidth="2.600" /></>,
  <><rect x="2" y="3" width="21" height="16" fill="#fff" stroke={K} strokeWidth="1.500" />{calloutNumber(5, 15)}<g transform="translate(-1,-2)"><Bolt s={0.6} /></g></>,
  <><rect x="2" y="0" width="20" height="22" fill="#fff" stroke={K} strokeWidth="1.500" /><path d="M10 4h12" stroke={K} />{r(5, 15, 3, 3, LG, G)}{funnelOver}<g transform="translate(-1,-2)"><Bolt s={0.6} /></g></>,
  <><path d="M2 0h20v21H1V9M14 21c-6-6 3-8 0-11 3-1 3-6 8-6" fill="#fff" stroke={B} strokeWidth="1.500" /><path d="M10 21c0-4 2-5 1-8 4 0 2-5 5-5-1-4 2-4 6-5v13l-7 5z" fill={L} /><path d="M-1-1h8v7l-4 6-4-6z" fill="#e07000" /><circle cx="3" cy="3" r="1.300" fill="#fff" /><circle cx="19" cy="19" r="3.500" fill="#e07000" stroke="#f3f2f1" /><circle cx="22" cy="13" r="2" fill="#e07000" /></>,
  <path d="M1 11.500 9 2.500q2.500-2 5 0l8 9-8 9q-2.500 2-5 0zM5 7.500l9 10.500M9 2.500l9.500 10.500M18 7l-9.500 11M14 2.500l-9.500 11" stroke="#9f3fb0" strokeWidth="1.500" strokeLinejoin="round" />,
  <path d="M1 2h13l8 9-8 10H1l8-10zM1 2l11 12M6 2l9 10M1 20l11-16" fill="#fff" stroke="#1b86e0" strokeWidth="1.400" />,
];

function FiltersPane() {
  return (
    <div className="flex w-[41px] flex-col items-center border-l border-[#b3b0ad] bg-white pt-[16px]">
      <Svg w={15} h={16} className="mr-px"><path d="M7.500.5L.7 8l6.800 7.500M14.500.5L7.700 8l6.800 7.500" stroke={K} strokeWidth="1.500" /></Svg>
      <Svg w={14} h={16} className="ml-[8px] mt-[19px]"><path d="M13 1v14L6 10H1V6h5z" stroke={K} strokeWidth="1.400" /></Svg>
      <span className="mt-[9px] text-[18px] font-semibold leading-[22px] tracking-[-0.050px] text-[#252423] [writing-mode:vertical-rl]">Filters</span>
    </div>
  );
}

function Toggle({ on }) {
  return on ? (
    <span className="flex h-5 w-10 items-center justify-end gap-[3px] rounded-full bg-[#117865] pr-[5px] text-[11px] leading-none text-white">
      <span className="mt-0.5">On</span><span className="size-[11px] rounded-full bg-white" />
    </span>
  ) : (
    <span className="flex h-5 w-10 items-center gap-[2px] rounded-full border border-[#797775] bg-white pl-[5px] text-[11px] leading-none text-[#605e5c]">
      <span className="size-[10px] shrink-0 rounded-full bg-[#605e5c]" /><span className="mt-0.5">Off</span>
    </span>
  );
}

function VisualizationsPane() {
  return (
    <div className="w-[226px] border-l border-[#dcdad8] bg-[#f3f2f1] text-[15px] text-[#252423]">
      <div className="flex h-[49px] items-center justify-between pl-[10px] pr-[10px]">
        <h2 className="text-[18px] font-semibold tracking-[-0.2px]">Visualizations</h2>
        <Svg w={15} h={16}><path d="M.5.5L7.300 8 .5 15.500M7.500.5L14.300 8l-6.800 7.500" stroke={K} strokeWidth="1.500" /></Svg>
      </div>
      <div className="h-[23px] pl-[10px] font-medium leading-[17px] tracking-[-0.2px]">Build visual</div>
      <div className="flex h-[46px] pl-[10px]">
        <div className="flex size-10 items-center justify-center rounded-[2px] bg-[#d2d0ce]">
          <Svg w={30} h={30}>
            <path d="M0 1h24" stroke={K} strokeWidth="1.500" />
            <rect x=".8" y="7" width="28.500" height="9" fill="#117865" stroke="#222" strokeWidth="1.500" strokeDasharray="2 1.500" />
            <rect x=".8" y="20.500" width="28.500" height="9" fill="#117865" stroke="#222" strokeWidth="1.500" strokeDasharray="2 1.500" />
          </Svg>
        </div>
        <Svg w={30} h={30} className="ml-[48px] mt-[5px]">
          <path d="M5 29H1V1h12l8 8M13 1v9h8" stroke={K} strokeWidth="1.600" />
          <path d="M29 11c-5 1-10 7-13 12l3 2c4-4 9-9 10-14zM15 22c-4 1-4 5-7 6 5 2 10 0 10-4z" stroke={K} strokeWidth="1.500" fill="#f3f2f1" />
        </Svg>
      </div>
      <Svg w={225} h={10}><path d="M0 9.500h21l9-9 9 9h186" stroke="#8a8886" strokeWidth="1.200" /></Svg>
      <div className="grid grid-cols-6 gap-[12px] pl-[14px] pr-[13px] pt-[14px]">
        {vizIcons.map((ic, i) => <Svg key={i} w={23}>{ic}</Svg>)}
      </div>
      <div className="mt-[14px] h-[36px] border-b border-[#dcdad8] pl-[15px]">
        <Svg w={20} h={14} className="-mt-1"><path d="M1.500 11h2M8.500 11h2M16 11h2" stroke="#252423" strokeWidth="2" /></Svg>
      </div>
      <div className="pl-[15px] leading-[42px] tracking-[-0.1px] text-[#323130]">Values</div>
      <div className="-mt-[5px] ml-[5px] flex h-[35px] w-[213px] items-center border border-dashed border-[#c8c6c4] bg-white pl-[13px] tracking-[-0.250px]">Add data fields here</div>
      <div className="mt-[12px] pl-[15px] font-medium leading-6 text-[#484644]">Drill through</div>
      <div className="mt-[4px] flex h-[30px] items-center justify-between pl-[15px] pr-[27px] tracking-[-0.450px]">Cross-report<Toggle /></div>
      <div className="mt-[4px] flex h-[30px] items-center justify-between pl-[15px] pr-[27px] tracking-[-0.400px]">Keep all filters<Toggle on /></div>
      <div className="ml-[5px] mt-[8px] flex h-[32px] w-[213px] items-center whitespace-nowrap border border-dashed border-[#c8c6c4] bg-white pl-[10px] tracking-[-0.300px]">Add drill-through fields here</div>
    </div>
  );
}

const Mark = ({ children }) => <span className="inline-block h-[20px] bg-[#117865] font-medium leading-[19px] tracking-[-0.550px] text-white">{children}</span>;

function DataPane() {
  return (
    <div className="flex-1 border-l border-[#dcdad8] bg-[#f3f2f1] text-[15px] text-[#605e5c]">
      <div className="relative flex h-[50px] items-center pl-[11px]">
        <h2 className="text-[18px] font-semibold text-[#252423]">Data</h2>
        <KeyTip className="right-[10px] top-[10px] w-[28px]">ZR</KeyTip>
      </div>
      <div className="ml-[5px] mt-[7px] flex h-[33px] w-[215px] items-center rounded-[2px] border border-[#797775] pl-[9px] pr-[9px] text-[17px]">
        <Svg w={18}><circle cx="12" cy="6.500" r="5.500" stroke="#605e5c" strokeWidth="1.200" /><path d="M8 10.500L1 17.500" stroke="#605e5c" strokeWidth="1.200" /></Svg>
        <span className="ml-[8px] mt-px flex-1 tracking-[-0.3px]">Property</span>
        <Svg w={15}><path d="M.5.5l14 14M14.500.5l-14 14" stroke="#605e5c" strokeWidth="1.200" /></Svg>
      </div>
      <div className="mt-[11px] flex h-[30px] items-center pl-[9px]">
        <Chevron w={14} sw={0.9} color="#605e5c" />
        <Svg w={16} className="ml-[5px]"><rect x="1" y="1" width="14" height="14" rx="3" stroke={K} strokeWidth="1.700" /><path d="M1 5.500h14M1 10.500h14M5.500 1v14M10.500 1v14" stroke={K} strokeWidth="1.300" /></Svg>
        <span className="ml-[8px] whitespace-nowrap tracking-[-0.430px]">Power BI Data Set Dem...</span>
      </div>
      {[[null, "ID"], [null, "Status"], ["Total", ""]].map(([pre, post], i) => (
        <div key={i} className="flex h-[30px] items-center pl-[48px]">
          <span className="size-[15px] rounded-[2px] border border-[#797775]" />
          <span className="flex w-[32px] justify-center">{pre && <Svg w={13} h={15}><path d="M12 3V1H1l6 6.500L1 14h11v-2" stroke={K} strokeWidth="1.400" /></Svg>}</span>
          <span className="whitespace-nowrap tracking-[-0.400px]">{pre && `${pre} `}<Mark>Property</Mark> {post}</span>
        </div>
      ))}
    </div>
  );
}

/* ---------- Status bar and taskbar ---------- */
function StatusBar() {
  return (
    <div className="flex h-[30px] shrink-0 items-center border-b-2 border-t border-b-black border-t-[#dcdad8] bg-[#f3f2f1] pl-[5px] text-[15px] text-[#484644]">
      <span className="mt-[4px] tracking-[-0.3px]">Page 2 of 2</span>
      <div className="ml-auto flex items-center pr-[22px]">
        <Svg w={153} h={16}>
          <path d="M0 8h6" stroke="#484644" strokeWidth="2" />
          <path d="M12 8.500h125M74.500 5v7" stroke="#605e5c" />
          <rect x="37" y="2" width="5" height="13" fill="#605e5c" />
          <path d="M144 8h9M148.500 3.500v9" stroke="#484644" strokeWidth="2" />
        </Svg>
        <span className="ml-[17px] w-[52px] text-[15px] tracking-[-0.5px] text-[#605e5c]">50%</span>
        <Svg w={21} h={16} className="mt-0.5"><rect x="1" y="1" width="19" height="14" stroke="#605e5c" strokeWidth="1.600" /><path d="M4 7V4h3M14 4h3v3M17 9v3h-3M7 12H4V9" stroke="#605e5c" strokeWidth="1.200" /></Svg>
      </div>
    </div>
  );
}

const taskIcons = [
  <><rect x="1" y="9" width="21" height="20" rx="1" fill="#2b2b2b" /><rect x="8" y="1" width="21" height="19" rx="1" fill="#fff" fillOpacity=".8" stroke="#ddd" strokeWidth=".5" /></>,
  <><path d="M15 1a14 14 0 1 1-7 26l-7 2 2-6A14 14 0 0 1 15 1z" fill="url(#teams)" /><rect x="8" y="9" width="10" height="11" rx="2" fill="#fff" /><path d="M19 12l4-3v11l-4-3z" fill="#fff" /></>,
  <><path d="M0 4c0-1 1-2 2-2h8l3 4h15c1 0 2 1 2 2v18c0 1-1 2-2 2H2c-1 0-2-1-2-2z" fill="#e8a317" /><rect y="7" width="30" height="21" rx="1.500" fill="#ffcb45" /><path d="M5 28v-6c0-1 1-2 2-2h16c1 0 2 1 2 2v6z" fill="#1173c7" /><rect x="9" y="22" width="12" height="2" fill="#0b4f91" /></>,
  <><path d="M9 6V2h12v4" stroke="#37bdf0" strokeWidth="2.500" /><path d="M1 5h28v20a4 4 0 0 1-4 4H5a4 4 0 0 1-4-4z" fill="#14508f" /><path d="M10 12h4.500v4.500H10z" fill="#f25022" /><path d="M15.500 12H20v4.500h-4.500z" fill="#7fba00" /><path d="M10 17.500h4.500V22H10z" fill="#00a4ef" /><path d="M15.500 17.500H20V22h-4.500z" fill="#ffb900" /></>,
  <><circle cx="15" cy="15" r="15" fill="#fff" /><path d="M7 23l1.200-4.500A8.500 8.500 0 1 1 11.500 22z" stroke="#25d366" strokeWidth="2" /><path d="M12 11c-1 2 0 4 2 6s4 3 6 1l-2-2-1.500 1c-1.500-.7-2.500-1.700-3-3l1-1.500-1-2z" fill="#25d366" /></>,
  <><rect x="2" y="2" width="26" height="26" fill="url(#pc)" /><rect x="5" y="5" width="20" height="20" fill="#000" /><text x="7" y="15" fontSize="9" fontWeight="700" fill="#fff">PC</text><rect x="8" y="21" width="7" height="1.500" fill="#fff" /></>,
  <><circle cx="15" cy="15" r="15" fill="url(#edge)" /><path d="M1 12C4 3 16-1 24 5c5 4 6 9 5 12-2 4-9 4-10 1 2-7-9-10-18-6z" fill="url(#edge2)" /><path d="M12 16c-1 7 5 12 15 8-3 5-8 6-12 6-6-3-9-10-3-14z" fill="#114a8b" /><path d="M13 15c2-3 6-1 6 3 1 3 6 3 9 1l-2 5c-8 3-15-2-13-9z" fill="#ededed" /></>,
  <><path d="M8 0h14l3 3 3 1 0 6-3 13-10 7L5 23 2 10V4l3-1z" fill="#fb542b" /><path d="M15 5l7 1 2 4-3 5 1 4-7 6-7-6 1-4-3-5 2-4z" fill="#fff" /><path d="M9 11l4 1-1 3M21 11l-4 1 1 3M12 19h6l-3 2z" fill="#fb542b" /></>,
  <><rect x="17" y="1" width="9" height="28" rx="1" fill="#d19a16" /><rect x="10" y="8" width="9" height="21" rx="1" fill="#eebf34" /><rect x="4" y="16" width="9" height="13" rx="1" fill="#f6d766" /></>,
  <><rect x="8" y="2" width="22" height="26" rx="1.500" fill="#21a366" /><path d="M19 2h11v9H19z" fill="#33c481" /><path d="M8 11h11v8H8zM8 19h22v9H8z" fill="#185c37" /><path d="M8 11h11v8H8z" fill="#107c41" /><rect y="7" width="15" height="16" rx="1" fill="#107c41" /><path d="M4.500 10.500l6 9M10.500 10.500l-6 9" stroke="#fff" strokeWidth="2" /></>,
];

/* Short, wide feather fan around the mask */
const feathers = Array.from({ length: 23 }, (_, i) => {
  const t = Math.PI * (-0.22 + (i / 22) * 1.44);
  const len = i % 2 ? 1 : 0.82;
  return [28 - 26 * len * Math.cos(t), 19 - 18 * len * Math.sin(t), ["#0f5f72", "#27a0a8", "#1b7f90", "#56bdbd"][i % 4]];
});

function Taskbar() {
  return (
    <footer className="flex h-[60px] shrink-0 items-center bg-[#ededed] text-[14.500px] text-[#252423]">
      <div className="flex w-[530px] items-center pl-[28px]">
        <Svg w={30} h={30}>
          <circle cx="12" cy="17" r="12" fill="url(#sun)" /><circle cx="21" cy="5.500" r="9.800" fill="#c42b1c" />
          <text x="21" y="10" textAnchor="middle" fontSize="12" fill="#fff">1</text>
        </Svg>
        <div className="ml-[6px] leading-5 tracking-[-0.2px]"><div>22°C</div><div className="text-[#666]">Sunny</div></div>
      </div>
      <Svg w={29} h={29}>
        <path d="M0 1.500L1.500 0H14v14H0zM15 0h12.500L29 1.500V14H15zM0 15h14v14H1.500L0 27.500zM15 15h14v12.500L27.500 29H15z" fill="url(#win)" />
      </Svg>
      <div className="ml-[18px] flex h-10 w-[273px] items-center rounded-full border border-[#dcdcdc] bg-[#fafafa] pl-[13px] shadow-[0_1px_1px_rgba(0,0,0,0.15)]">
        <Svg w={19}><circle cx="8.500" cy="8.500" r="7" stroke="#252423" strokeWidth="2" /><path d="M13.500 13.500l5 5" stroke="#252423" strokeWidth="2.300" /></Svg>
        <span className="ml-[12px] text-[16.500px] tracking-[-0.3px] text-[#555]">Search</span>
        <Svg w={57} h={34} className="ml-auto mr-[7px]">
          {feathers.map(([x, y, c], i) => <path key={i} d={`M28 20L${x.toFixed(1)} ${y.toFixed(1)}`} stroke={c} strokeWidth="3.600" strokeLinecap="round" />)}
          <path d="M18 11l5 3 5-6 5 6 5-3c1 11-3 21-10 22-7-1-11-11-10-22z" fill="#dca84a" />
          <path d="M23 22c2-1 8-1 10 0 0 6-2 10-5 11-3-1-5-5-5-11z" fill="#f1dcc4" />
          <path d="M20 18l5 1.500-4 1.500zM36 18l-5 1.500 4 1.500z" fill="#21323c" /><path d="M26 28.500h4l-2 1.500z" fill="#c22" /><path d="M28 10v8" stroke="#9b5ba4" strokeWidth="2" />
        </Svg>
      </div>
      <div className="ml-[3px] flex items-center">
        {taskIcons.map((ic, i) => (
          <div key={i} className={`relative flex h-[48px] w-[55px] items-center justify-center ${i === 8 ? "before:absolute before:inset-x-[3px] before:inset-y-0 before:rounded-[4px] before:border before:border-[#e0e0e0] before:bg-[#f9f9f9]" : ""}`}>
            <Svg w={30} h={30} className="relative">{ic}</Svg>
            {[2, 6, 7, 9].includes(i) && <span className="absolute bottom-0 h-[4px] w-[8px] rounded-full bg-[#868686]" />}
            {i === 8 && <span className="absolute bottom-0 h-[4px] w-[20px] rounded-full bg-[#0f78d4]" />}
          </div>
        ))}
      </div>
      <div className="ml-auto flex items-center pr-[26px]">
        <Chevron w={13} sw={1.500} className="mr-[24px] rotate-180" />
        <Svg w={22} h={20}><path d="M4 15a4.500 4.500 0 0 1 0-9c2-6 11-6 13 0 2 .5 4 2 4 4" stroke={K} strokeWidth="1.400" /><circle cx="15" cy="14" r="5" fill="#1a86d9" /><path d="M12 13.500c1-3 5-3 6 0M18 15c-1 3-5 3-6 0" stroke="#fff" strokeWidth="1.200" /></Svg>
        <div className="ml-[18px] w-[36px] text-center leading-5 tracking-[-0.300px]">ENG<br />IN</div>
        <Svg w={19} h={16} className="ml-[19px]"><path d="M1 6c5-6 12-6 17 0M4 9c3-4 8-4 11 0M7 12c2-2 3-2 5 0" stroke={K} strokeWidth="1.500" /><circle cx="9.500" cy="14" r="1.500" fill={K} /></Svg>
        <Svg w={20} h={18} className="ml-[10px]"><path d="M1 6h4l5-4v14l-5-4H1zM13 6c1 2 1 4 0 6M15.500 4c2 3 2 7 0 10M18 2c3 5 3 9 0 14" stroke={K} strokeWidth="1.300" /></Svg>
        <Svg w={21} h={18} className="ml-[10px]"><rect x="4" y="5" width="14" height="9" rx="2" stroke={K} strokeWidth="1.400" /><path d="M10 7h6v5H9z" fill={K} /><path d="M19.500 8v3" stroke={K} strokeWidth="2" /><path d="M1 7c0 4 5 4 5 0V5H1zM2 2v3M5 2v3M3.500 11v5" stroke={K} strokeWidth="1.300" fill="#ededed" /></Svg>
        <div className="ml-[19px] w-[80px] whitespace-nowrap text-right leading-5">12:46<br />03-02-2024</div>
        <Svg w={17} h={19} className="ml-[10px]"><path d="M1 14l2-3V7a5.500 5.500 0 0 1 11 0v4l2 3zM6 15c0 3 5 3 5 0" stroke={K} strokeWidth="1.400" /></Svg>
      </div>
      <svg width="0" height="0" className="absolute">
        <defs>
          <linearGradient id="sun" x1="0" y1="0" x2="1" y2="1"><stop stopColor="#f4c430" /><stop offset="1" stopColor="#f0560f" /></linearGradient>
          <linearGradient id="win" x1="0" y1="0" x2="1" y2="1"><stop stopColor="#53d0fc" /><stop offset="1" stopColor="#0067cf" /></linearGradient>
          <linearGradient id="teams" x1="1" y1="0" x2="0" y2="1"><stop stopColor="#8a5bb0" /><stop offset="1" stopColor="#5560d0" /></linearGradient>
          <linearGradient id="pc" x1="0" y1="0" x2="1" y2="1"><stop stopColor="#21d789" /><stop offset=".5" stopColor="#c6f02b" /><stop offset="1" stopColor="#fcf84a" /></linearGradient>
          <linearGradient id="edge" x1="0" y1="0" x2="0" y2="1"><stop stopColor="#1b9de2" /><stop offset="1" stopColor="#0c59a4" /></linearGradient>
          <linearGradient id="edge2" x1="0" y1="0" x2="1" y2="0"><stop stopColor="#35b8e8" /><stop offset="1" stopColor="#5fd35b" /></linearGradient>
        </defs>
      </svg>
    </footer>
  );
}

export default function App() {
  return (
    <div className="flex h-[1080px] w-[1920px] flex-col overflow-hidden bg-white font-[Open_Sans,sans-serif]">
      <TitleBar />
      <Ribbon />
      <main className="flex h-[790px] shrink-0">
        <Rail />
        <div className="flex w-[1417px] flex-col">
          <div className="flex h-[746px]">
            <div className="w-[1376px] bg-white"><Report /></div>
            <FiltersPane />
          </div>
          <PageTabs />
        </div>
        <VisualizationsPane />
        <DataPane />
      </main>
      <StatusBar />
      <Taskbar />
    </div>
  );
}
